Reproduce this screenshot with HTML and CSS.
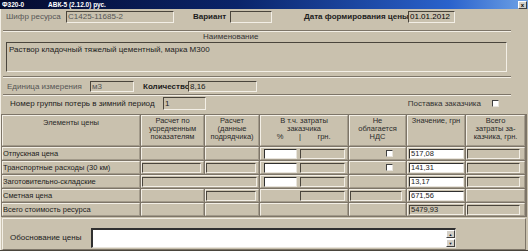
FILE: index.html
```html
<!DOCTYPE html>
<html lang="ru">
<head>
  <meta charset="UTF-8" />
  <title>Ф320-0</title>
  <link rel="stylesheet" href="styles.css">
</head>
<body>

  <div class="window">
    <div class="titlebar">
      <span class="form-code">Ф320-0</span>
      <span class="app-name">АВК-5 (2.12.0) рус.</span>
      <span class="close-btn">x</span>
    </div>

    <div class="client">
      <!-- resource header -->
      <div class="row top-row">
        <span class="lbl muted lbl-code">Шифр ресурса</span>
        <div class="field w-code muted">С1425-11685-2</div>
        <span class="lbl bold lbl-var">Вариант</span>
        <div class="field w-var"></div>
        <span class="lbl bold lbl-date">Дата формирования цены</span>
        <div class="field w-date">01.01.2012</div>
      </div>

      <div class="groove"></div>
      <div class="caption">Наименование</div>
      <div class="name-box">Раствор кладочный тяжелый цементный, марка М300</div>

      <div class="groove groove-units"></div>
      <div class="row units-row">
        <span class="lbl muted lbl-unit">Единица измерения</span>
        <div class="field w-unit muted">м3</div>
        <span class="lbl bold lbl-qty">Количество</span>
        <div class="field w-qty">8,16</div>
      </div>

      <div class="groove"></div>
      <div class="row group-row">
        <span class="lbl lbl-group">Номер группы потерь в зимний период</span>
        <div class="field w-group">1</div>
        <span class="spacer"></span>
        <span class="lbl lbl-supply">Поставка заказчика</span>
        <span class="check check-supply"></span>
      </div>

      <!-- price table -->
      <div class="price-grid">
        <div class="cell head head-main">Элементы цены</div>
        <div class="cell head">Расчет по<br>усредненным<br>показателям</div>
        <div class="cell head">Расчет<br>(данные<br>подрядчика)</div>
        <div class="cell head">
          В т.ч. затраты<br>заказчика
          <div class="sub-head"><span class="sub-pct">%</span><span class="sub-bar">|</span><span class="sub-uah">грн.</span></div>
        </div>
        <div class="cell head">Не<br>облагается<br>НДС</div>
        <div class="cell head">Значение, грн</div>
        <div class="cell head">Всего<br>затраты за-<br>казчика, грн.</div>

        <div class="cell name">Отпускная цена</div>
        <div class="cell"></div>
        <div class="cell"></div>
        <div class="cell pair"><div class="field white w-pct"></div><div class="field w-uah"></div></div>
        <div class="cell vat"><span class="check"></span></div>
        <div class="cell value"><div class="field white w-value">517,08</div></div>
        <div class="cell total"><div class="field w-total"></div></div>

        <div class="cell name">Транспортные расходы (30 км)</div>
        <div class="cell calc"><div class="field w-avg"></div></div>
        <div class="cell calc"><div class="field w-contr"></div></div>
        <div class="cell pair"><div class="field white w-pct"></div><div class="field w-uah"></div></div>
        <div class="cell vat"><span class="check"></span></div>
        <div class="cell value"><div class="field white w-value">141,31</div></div>
        <div class="cell total"><div class="field w-total"></div></div>

        <div class="cell name">Заготовительно-складские</div>
        <div class="cell calc span2"><div class="field w-wide"></div></div>
        <div class="cell pair"><div class="field white w-pct"></div><div class="field w-uah"></div></div>
        <div class="cell"></div>
        <div class="cell value"><div class="field white w-value">13,17</div></div>
        <div class="cell total"><div class="field w-total"></div></div>

        <div class="cell name">Сметная цена</div>
        <div class="cell"></div>
        <div class="cell calc"><div class="field w-contr"></div></div>
        <div class="cell pair"><div class="field w-none"></div><div class="field w-uah"></div></div>
        <div class="cell calc"><div class="field w-vat"></div></div>
        <div class="cell value"><div class="field white w-value">671,56</div></div>
        <div class="cell"></div>

        <div class="cell name">Всего стоимость ресурса</div>
        <div class="cell"></div>
        <div class="cell"></div>
        <div class="cell"></div>
        <div class="cell"></div>
        <div class="cell value"><div class="field w-value">5479,93</div></div>
        <div class="cell total"><div class="field w-total"></div></div>
      </div>

      <!-- price basis -->
      <div class="basis">
        <span class="lbl lbl-basis">Обоснование цены</span>
        <div class="memo">
          <div class="memo-scroll">
            <span class="scroll-btn">&#9650;</span>
            <span class="scroll-btn">&#9660;</span>
          </div>
        </div>
      </div>
    </div>
  </div>

</body>
</html>
```

FILE: styles.css
```css
:root {
  --face: #c9c1ae;
  --shadow: #7d7568;
  --dark: #4a453c;
  --light: #f3efe6;
}

* {
  box-sizing: border-box;
}

body {
  margin: 0;
  background: var(--face);
  font-family: "Liberation Sans", Arial, sans-serif;
  font-size: 8px;
  color: #1c1c1c;
}

.window {
  width: 528px;
  height: 251px;
  display: flex;
  flex-direction: column;
  background: var(--face);
  border-bottom: 1px solid var(--dark);
  overflow: hidden;
}

.titlebar {
  height: 10px;
  display: flex;
  align-items: center;
  padding-left: 2px;
  background: linear-gradient(90deg, #050b2e 0%, #0a246a 45%, #2a62cc 85%, #6ea2e6 100%);
  color: #fff;
  font-size: 6.5px;
  font-weight: bold;
}

.form-code {
  width: 46px;
}

.close-btn {
  margin-left: auto;
  margin-right: 1px;
  width: 9px;
  height: 8px;
  line-height: 7px;
  text-align: center;
  background: #d4d0c8;
  color: #000;
  border: 1px solid;
  border-color: #fff #404040 #404040 #fff;
  font-size: 6px;
}

.client {
  flex: 1;
  display: flex;
  flex-direction: column;
  border-left: 1px solid var(--light);
}

.row {
  display: flex;
  align-items: center;
}

.lbl {
  white-space: nowrap;
}

.muted {
  color: #555;
}

.bold {
  font-weight: bold;
}

.field {
  height: 11px;
  line-height: 9px;
  padding: 0 1px;
  border: 1px solid;
  border-color: var(--dark) var(--light) var(--light) var(--dark);
  background: var(--face);
  white-space: nowrap;
  overflow: hidden;
}

.field.white {
  background: #fff;
  border-color: #303030 #e8e4dc #e8e4dc #303030;
}

/* top row */
.top-row {
  height: 21px;
  align-items: flex-start;
  padding-top: 2px;
}

.top-row .field {
  height: 12px;
  line-height: 10px;
}

.top-row .lbl {
  line-height: 12px;
}

.lbl-code { margin-left: 5px; width: 60px; }
.w-code { width: 108px; }
.lbl-var { margin-left: 19px; width: 37px; }
.w-var { width: 42px; }
.lbl-date { margin-left: 32px; width: 104px; }
.w-date { width: 47px; color: #000; }

.groove {
  height: 2px;
  margin: 0 17px 0 2px;
  border-top: 1px solid var(--shadow);
  border-bottom: 1px solid var(--light);
}

.caption {
  height: 10px;
  line-height: 10px;
  padding-left: 202px;
  color: #333;
}

.name-box {
  height: 30px;
  margin: 0 21px 0 5px;
  padding: 2px 2px;
  border: 1px solid;
  border-color: var(--dark) var(--light) var(--light) var(--dark);
  color: #222;
}

.groove-units {
  margin-top: 4px;
}

/* units row */
.units-row {
  height: 16px;
}

.lbl-unit { margin-left: 6px; width: 83px; }
.w-unit { width: 44px; }
.lbl-qty { margin-left: 9px; width: 45px; }
.w-qty { width: 69px; }

/* group row */
.group-row {
  height: 18px;
  align-items: flex-start;
  padding-top: 1px;
}

.group-row .lbl {
  line-height: 13px;
}

.lbl-group { margin-left: 9px; width: 153px; }
.w-group { width: 43px; height: 13px; line-height: 11px; }

.spacer {
  flex: 1;
}

.lbl-supply {
  color: #333;
}

.check {
  display: inline-block;
  width: 7px;
  height: 7px;
  background: #fff;
  border: 1px solid;
  border-color: #404040 #e8e4dc #e8e4dc #404040;
}

.check-supply {
  margin: 3px 29px 0 11px;
}

/* price table */
.price-grid {
  margin-left: 0;
  width: 526px;
  display: grid;
  grid-template-columns: 138px 63px 54px 88px 57px 58px 59px;
  grid-template-rows: 31px repeat(5, 13px);
  gap: 1px;
  padding: 1px;
  background: var(--shadow);
}

.cell {
  display: flex;
  align-items: center;
  background: var(--face);
  border: 1px solid;
  border-color: var(--light) #a29a8a #a29a8a var(--light);
}

.cell.head {
  display: block;
  padding-top: 1px;
  text-align: center;
  line-height: 8px;
  font-size: 7.5px;
  color: #2a2a2a;
}

.head-main {
  padding-top: 3px !important;
}

.sub-head {
  display: flex;
}

.sub-pct { width: 38px; }
.sub-bar { width: 2px; }
.sub-uah { width: 46px; }

.cell.name {
  padding-left: 0;
  white-space: nowrap;
  font-size: 7.5px;
}

.cell .field {
  height: 10px;
  line-height: 8px;
  font-size: 7.5px;
}

.span2 {
  grid-column: span 2;
}

.calc { padding-left: 0; }
.w-avg { width: 59px; }
.w-contr { width: 50px; }
.w-wide { width: 115px; }
.w-vat { width: 52px; }

.pair { padding-left: 3px; gap: 3px; }
.w-pct { width: 33px; }
.w-uah { width: 45px; }
.w-none { width: 33px; visibility: hidden; }

.vat {
  justify-content: flex-end;
  padding-right: 12px;
}

.value { padding-left: 1px; }
.w-value { width: 55px; }
.w-total { width: 53px; }

/* price basis */
.basis {
  height: 32px;
  margin: 1px 2px 0 1px;
  display: flex;
  align-items: center;
  padding: 8px 0 1px 7px;
  border: 1px solid;
  border-color: var(--light) var(--shadow) var(--shadow) var(--light);
}

.lbl-basis {
  width: 81px;
}

.memo {
  width: 365px;
  height: 20px;
  display: flex;
  justify-content: flex-end;
  background: #fff;
  border: 1px solid;
  border-color: #303030 #e8e4dc #e8e4dc #303030;
  border-width: 2px 1px 1px 2px;
}

.memo-scroll {
  width: 9px;
  display: flex;
  flex-direction: column;
  justify-content: space-between;
}

.scroll-btn {
  height: 8px;
  line-height: 7px;
  text-align: center;
  font-size: 4px;
  background: #d4d0c8;
  border: 1px solid;
  border-color: #fff #404040 #404040 #fff;
}
```
